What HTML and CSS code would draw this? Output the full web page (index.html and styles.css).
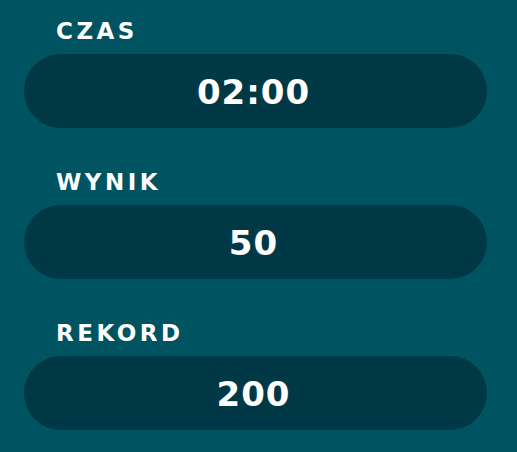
FILE: index.html
```html
<!DOCTYPE html>
<html lang="pl">
<head>
<meta charset="utf-8">
<link rel="stylesheet" href="styles.css">
</head>
<body>
<div class="stats">
  <div class="stat">
    <div class="label">CZAS</div>
    <div class="value">02:00</div>
  </div>
  <div class="stat">
    <div class="label">WYNIK</div>
    <div class="value">50</div>
  </div>
  <div class="stat">
    <div class="label">REKORD</div>
    <div class="value">200</div>
  </div>
</div>
</body>
</html>
```
FILE: styles.css
```css
html, body {
  margin: 0;
  padding: 0;
  background: #005360;
  height: 100%;
}
.stats {
  display: flex;
  flex-direction: column;
  gap: 43px;
  padding: 20px 30px 0 24px;
  font-family: "DejaVu Sans", sans-serif;
  font-weight: bold;
  color: #ffffff;
}
.stat {
  display: flex;
  flex-direction: column;
  gap: 12px;
}
.label {
  font-size: 23px;
  line-height: 22px;
  letter-spacing: 3.5px;
  padding-left: 32px;
}
.value {
  height: 74px;
  border-radius: 37px;
  background: #003945;
  text-align: center;
  font-size: 34px;
  line-height: 74px;
  letter-spacing: 1px;
  padding: 1px 4px 0 0;
  box-sizing: border-box;
}
```
